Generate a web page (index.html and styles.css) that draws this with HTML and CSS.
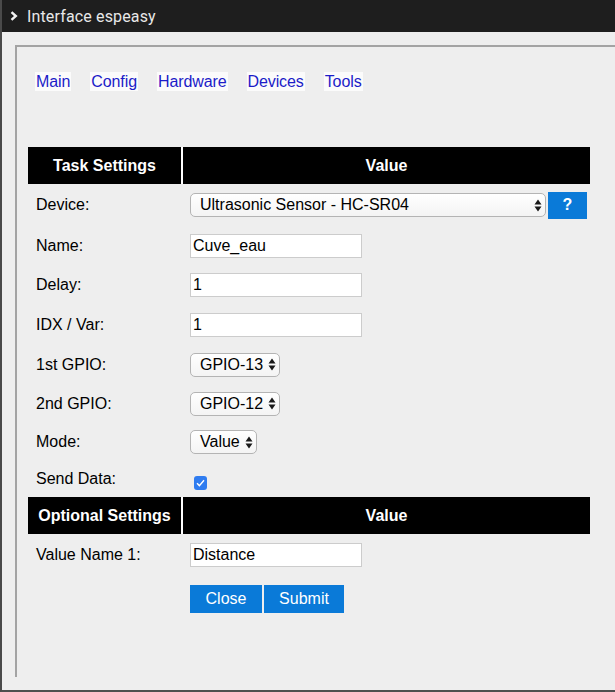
FILE: index.html
```html
<!DOCTYPE html>
<html>
<head>
<meta charset="utf-8">
<link rel="stylesheet" href="styles.css">
</head>
<body>
<div class="window">
  <div class="titlebar">
    <svg class="chev" width="8" height="10" viewBox="0 0 8 10"><path d="M1.5 1.2 L5.8 5 L1.5 8.8" fill="none" stroke="#f2f2f2" stroke-width="2.4"/></svg>
    <span class="title">Interface espeasy</span>
  </div>
  <div class="panel">
    <nav class="menu">
      <a href="#">Main</a>
      <a href="#">Config</a>
      <a href="#">Hardware</a>
      <a href="#">Devices</a>
      <a href="#">Tools</a>
    </nav>
    <table class="settings">
      <tr class="head"><th class="c1">Task Settings</th><th class="c2">Value</th></tr>
      <tr class="r-dev"><td class="lbl">Device:</td><td><div class="sel-wrap"><span class="sel wide">Ultrasonic Sensor - HC-SR04<svg class="arrows" width="8" height="13" viewBox="0 0 8 13"><path d="M4 0.5 L7.5 5.5 L0.5 5.5 Z M4 12.5 L7.5 7.5 L0.5 7.5 Z" fill="#1a1a1a"/></svg></span><button class="btn help">?</button></div></td></tr>
      <tr class="r-name"><td class="lbl">Name:</td><td><input class="txt" value="Cuve_eau"></td></tr>
      <tr class="r-in"><td class="lbl">Delay:</td><td><input class="txt" value="1"></td></tr>
      <tr class="r-in"><td class="lbl">IDX / Var:</td><td><input class="txt" value="1"></td></tr>
      <tr class="r-sel2"><td class="lbl">1st GPIO:</td><td><span class="sel">GPIO-13<svg class="arrows" width="8" height="13" viewBox="0 0 8 13"><path d="M4 0.5 L7.5 5.5 L0.5 5.5 Z M4 12.5 L7.5 7.5 L0.5 7.5 Z" fill="#1a1a1a"/></svg></span></td></tr>
      <tr class="r-sel2"><td class="lbl">2nd GPIO:</td><td><span class="sel">GPIO-12<svg class="arrows" width="8" height="13" viewBox="0 0 8 13"><path d="M4 0.5 L7.5 5.5 L0.5 5.5 Z M4 12.5 L7.5 7.5 L0.5 7.5 Z" fill="#1a1a1a"/></svg></span></td></tr>
      <tr class="r-mode"><td class="lbl">Mode:</td><td><span class="sel">Value<svg class="arrows" width="8" height="13" viewBox="0 0 8 13"><path d="M4 0.5 L7.5 5.5 L0.5 5.5 Z M4 12.5 L7.5 7.5 L0.5 7.5 Z" fill="#1a1a1a"/></svg></span></td></tr>
      <tr class="r-chk"><td class="lbl">Send Data:</td><td><span class="chk"><svg width="9" height="8" viewBox="0 0 9 8"><path d="M1 4.2 L3.4 6.6 L8 1.2" fill="none" stroke="#fff" stroke-width="1.4"/></svg></span></td></tr>
      <tr class="head"><th class="c1">Optional Settings</th><th class="c2">Value</th></tr>
      <tr class="r-vn"><td class="lbl">Value Name 1:</td><td><input class="txt" value="Distance"></td></tr>
      <tr class="r-btn"><td></td><td><div class="btns"><button class="btn">Close</button><button class="btn">Submit</button></div></td></tr>
    </table>
  </div>
</div>
</body>
</html>
```

FILE: styles.css
```css
html, body {
  margin: 0;
  padding: 0;
  background: #eeeeee;
}
body {
  font-family: "Liberation Sans", Arial, sans-serif;
  font-size: 16px;
  color: #000;
}
.window {
  width: 615px;
  height: 692px;
  box-sizing: border-box;
  border-left: 2px solid #4a4a4a;
  border-bottom: 2px solid #4f4f4f;
  overflow: hidden;
}
.titlebar {
  height: 32px;
  background: #1e1e1e;
  display: flex;
  align-items: center;
  padding-left: 8px;
  gap: 9px;
}
.chev {
  display: block;
}
.title {
  font-family: Roboto, "Liberation Sans", sans-serif;
  font-size: 16px;
  color: #e8e8e8;
  letter-spacing: 0.15px;
}
.panel {
  margin: 13px 0 0 13px;
  height: 632px;
  box-sizing: border-box;
  border-top: 2px solid #a3a3a3;
  border-left: 2px solid #a3a3a3;
  padding: 25px 0 0 11px;
}
.menu {
  display: flex;
  gap: 19px;
  padding-left: 7px;
  height: 75px;
  letter-spacing: -0.1px;
}
.menu a {
  color: #1c1cc8;
  text-decoration: none;
  background: #fbfbfb;
  height: 19px;
  line-height: 19px;
  padding: 0 1px;
}
.settings {
  border-collapse: collapse;
  width: 562px;
}
.head th {
  background: #000;
  color: #fff;
  font-weight: bold;
  height: 37px;
  padding: 0;
  text-align: center;
}
.head .c1 {
  width: 153px;
}
.head .c2 {
  border-left: 2px solid #fff;
}
.settings td {
  padding: 0;
  vertical-align: middle;
}
.settings td.lbl {
  padding-left: 8px;
}
.settings td + td {
  padding-left: 8px;
}
.r-dev td { height: 42px; }
.r-name td { height: 39px; }
.r-in td { height: 40px; }
.r-sel2 td { height: 39px; }
.r-mode td { height: 38px; }
.r-chk td { height: 36px; }
.r-vn td { height: 42px; }
.r-btn td { height: 40px; vertical-align: top; padding-top: 9px; }
.txt {
  display: block;
  width: 172px;
  height: 24px;
  box-sizing: border-box;
  border: 1px solid #cccccc;
  background: #fff;
  font-family: "Liberation Sans", Arial, sans-serif;
  font-size: 16px;
  padding: 0 2px;
  margin: 0;
  color: #000;
}
.sel-wrap {
  display: flex;
  align-items: center;
  gap: 2px;
}
.sel {
  display: inline-flex;
  align-items: center;
  justify-content: space-between;
  height: 24px;
  box-sizing: border-box;
  border: 1px solid #b4b4b4;
  border-radius: 5px;
  background: linear-gradient(#ffffff, #f4f4f4);
  padding: 0 3px 0 9px;
  gap: 5px;
  font-size: 16px;
  vertical-align: middle;
}
.sel.wide {
  width: 356px;
}
.arrows {
  display: block;
}
.btn {
  background: #0a7ad8;
  color: #fff;
  border: 0;
  font-family: "Liberation Sans", Arial, sans-serif;
  font-size: 16px;
  padding: 0;
  margin: 0;
  height: 28px;
}
.help {
  width: 39px;
  height: 27px;
  font-weight: bold;
}
.btns {
  display: flex;
  gap: 2px;
}
.btns .btn:first-child { width: 72px; }
.btns .btn:last-child { width: 80px; }
.chk {
  display: flex;
  align-items: center;
  justify-content: center;
  width: 13px;
  height: 14px;
  margin: 7px 0 0 4px;
  border-radius: 3px;
  background: #2f7cf0;
}
.chk svg { display: block; }
```
